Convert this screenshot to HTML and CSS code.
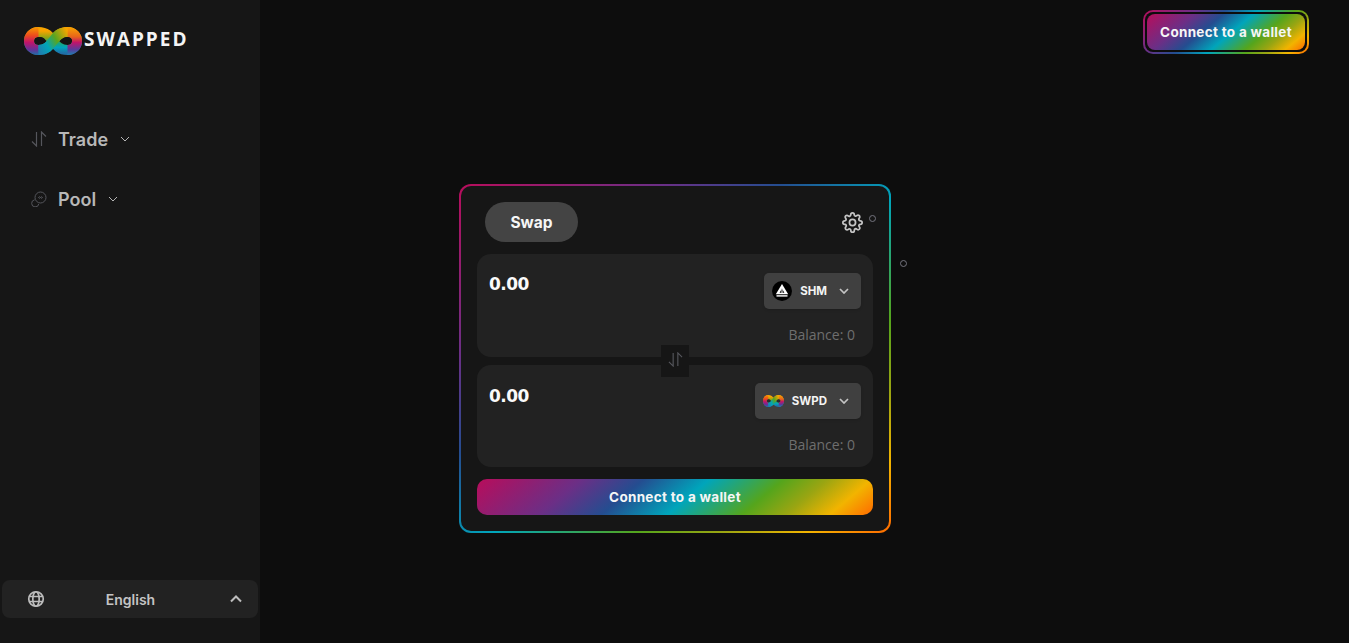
FILE: index.html
```html
<!DOCTYPE html>
<html lang="en">

<head>
    <meta charset="UTF-8">
    <title>Swapped</title>
    <link rel="stylesheet" href="styles.css">
</head>

<body>
    <!-- shared logo mark, used in the sidebar and the SWPD token -->
    <svg class="defs" width="0" height="0">
        <defs>
            <linearGradient id="ringGrad" gradientUnits="userSpaceOnUse" x1="0" y1="4" x2="0" y2="26">
                <stop offset="0" stop-color="#f7a400" />
                <stop offset="0.3" stop-color="#8fa514" />
                <stop offset="0.55" stop-color="#1aa678" />
                <stop offset="0.75" stop-color="#00a3bd" />
                <stop offset="1" stop-color="#1f6fa8" />
            </linearGradient>
            <linearGradient id="leftGrad" gradientUnits="userSpaceOnUse" x1="10" y1="0" x2="10" y2="28">
                <stop offset="0" stop-color="#f79a00" />
                <stop offset="0.3" stop-color="#ee4d1c" />
                <stop offset="0.55" stop-color="#c2136a" />
                <stop offset="0.8" stop-color="#6a2f96" />
                <stop offset="1" stop-color="#1f6fa8" />
            </linearGradient>
            <linearGradient id="rightGrad" gradientUnits="userSpaceOnUse" x1="48" y1="0" x2="48" y2="28">
                <stop offset="0" stop-color="#f7a400" />
                <stop offset="0.35" stop-color="#e8641a" />
                <stop offset="0.55" stop-color="#c2136a" />
                <stop offset="0.8" stop-color="#5a3a9a" />
                <stop offset="1" stop-color="#1f7fb0" />
            </linearGradient>
            <linearGradient id="ribbonGrad" gradientUnits="userSpaceOnUse" x1="14" y1="23" x2="44" y2="5">
                <stop offset="0" stop-color="#1f7fb0" />
                <stop offset="0.3" stop-color="#00a6b8" />
                <stop offset="0.6" stop-color="#5aa51e" />
                <stop offset="1" stop-color="#f7a400" />
            </linearGradient>
            <symbol id="infinity" viewBox="0 0 58 28" preserveAspectRatio="none">
                <path d="M29 14C26 10 23 5 14.500 5C8.500 5 5 9.300 5 14C5 18.700 8.500 23 14.500 23C23 23 26 18 29 14C32 10 35 5 43.500 5C49.500 5 53 9.300 53 14C53 18.700 49.500 23 43.500 23C35 23 32 18 29 14Z" fill="none" stroke="url(#ringGrad)" stroke-width="10" />
                <path d="M14.500 5C8.500 5 5 9.300 5 14C5 18.700 8.500 23 14.500 23" fill="none" stroke="url(#leftGrad)" stroke-width="10" />
                <path d="M43.500 5C49.500 5 53 9.300 53 14C53 18.700 49.500 23 43.500 23" fill="none" stroke="url(#rightGrad)" stroke-width="10" />
                <path d="M14.500 23C23 23 26 18 29 14C32 10 35 5 43.500 5" fill="none" stroke="url(#ribbonGrad)" stroke-width="10" />
                <ellipse cx="16" cy="13.500" rx="5" ry="3.500" fill="currentColor" />
                <ellipse cx="43" cy="13.500" rx="5" ry="3.500" fill="currentColor" />
            </symbol>
            <symbol id="arrows" viewBox="0 0 16 16">
                <path d="M5.500 1V15L1 10.500M10.500 15V1L15 5.500" fill="none" stroke="currentColor" stroke-width="1.200" />
            </symbol>
        </defs>
    </svg>

    <div class="app">
        <aside class="sidebar">
            <div class="brand">
                <svg class="brand-mark" width="58" height="28"><use href="#infinity" /></svg>
                <span class="brand-name">SWAPPED</span>
            </div>

            <nav class="nav">
                <div class="nav-item">
                    <svg class="nav-icon" width="16" height="16"><use href="#arrows" /></svg>
                    <span class="nav-label">Trade</span>
                    <svg class="nav-chevron" width="10" height="6" viewBox="0 0 10 6"><path d="M1 1L5 5L9 1" fill="none" stroke="#b5b5b5" stroke-width="1" /></svg>
                </div>
                <div class="nav-item">
                    <svg class="nav-icon" width="16" height="16" viewBox="0 0 16 16" fill="none" stroke="currentColor" stroke-width="1">
                        <circle cx="9.500" cy="6.500" r="5.500" />
                        <path d="M3.600 8.800A3.600 3.600 0 1 0 7.800 13" />
                        <path d="M7.500 6.500C8.200 5.500 8.800 5.500 9.500 6.500C10.200 7.500 10.800 7.500 11.500 6.500C10.800 5.500 10.200 5.500 9.500 6.500C8.800 7.500 8.200 7.500 7.500 6.500Z" />
                    </svg>
                    <span class="nav-label">Pool</span>
                    <svg class="nav-chevron" width="10" height="6" viewBox="0 0 10 6"><path d="M1 1L5 5L9 1" fill="none" stroke="#b5b5b5" stroke-width="1" /></svg>
                </div>
            </nav>

            <div class="lang">
                <svg width="18" height="18" viewBox="0 0 18 18" fill="none" stroke="#bdbdbd" stroke-width="1.700">
                    <circle cx="9" cy="9" r="7.250" />
                    <ellipse cx="9" cy="9" rx="3.200" ry="7.250" />
                    <path d="M2.200 6.500H15.800M2.200 11.500H15.800" />
                </svg>
                <span class="lang-name">English</span>
                <svg width="12" height="8" viewBox="0 0 12 8"><path d="M1 6.500L6 1.500L11 6.500" fill="none" stroke="#bdbdbd" stroke-width="2" /></svg>
            </div>
        </aside>

        <main class="content">
            <header class="topbar">
                <div class="wallet-frame">
                    <button class="wallet-btn">Connect to a wallet</button>
                </div>
            </header>

            <section class="swap-card">
                <span class="dot dot-near"></span>
                <span class="dot dot-far"></span>

                <div class="swap-head">
                    <div class="swap-tab">Swap</div>
                    <svg class="gear" width="21" height="21" viewBox="0 0 24 24" fill="none" stroke="#c4c4c4" stroke-width="2" stroke-linecap="round" stroke-linejoin="round">
                        <circle cx="12" cy="12" r="3.500" />
                        <path d="M19.400 15a1.650 1.650 0 0 0 .33 1.820l.06.06a2 2 0 1 1-2.830 2.830l-.06-.06a1.650 1.650 0 0 0-1.820-.33 1.650 1.650 0 0 0-1 1.510V21a2 2 0 1 1-4 0v-.09a1.650 1.650 0 0 0-1-1.510 1.650 1.650 0 0 0-1.820.33l-.06.06a2 2 0 1 1-2.830-2.830l.06-.06a1.650 1.650 0 0 0 .33-1.820 1.650 1.650 0 0 0-1.510-1H3a2 2 0 1 1 0-4h.09a1.650 1.650 0 0 0 1.510-1 1.650 1.650 0 0 0-.33-1.820l-.06-.06a2 2 0 1 1 2.830-2.830l.06.06a1.650 1.650 0 0 0 1.820.33h.08a1.650 1.650 0 0 0 1-1.510V3a2 2 0 1 1 4 0v.09a1.650 1.650 0 0 0 1 1.510 1.650 1.650 0 0 0 1.820-.33l.06-.06a2 2 0 1 1 2.830 2.830l-.06.06a1.650 1.650 0 0 0-.33 1.820v.08a1.650 1.650 0 0 0 1.510 1H21a2 2 0 1 1 0 4h-.09a1.650 1.650 0 0 0-1.510 1z" />
                    </svg>
                </div>

                <div class="panels">
                    <div class="panel panel-from">
                        <div class="panel-row">
                            <span class="amount">0.00</span>
                            <div class="token">
                                <svg width="20" height="20" viewBox="0 0 20 20">
                                    <circle cx="10" cy="10" r="10" fill="#000" />
                                    <path d="M10 3L16.200 13.200H3.800Z" fill="#fff" />
                                    <path d="M10 7.500L12.400 11.800H7.600Z" fill="#000" />
                                    <path d="M9.500 8H10.500V12.500H9.500Z" fill="#fff" />
                                    <path d="M4.500 14.200H15.500V15.600H4.500Z" fill="#fff" />
                                </svg>
                                <span class="token-name">SHM</span>
                                <svg class="token-chevron" width="10" height="6" viewBox="0 0 10 6"><path d="M1 1L5 5L9 1" fill="none" stroke="#c4c4c4" stroke-width="1.700" /></svg>
                            </div>
                        </div>
                        <div class="balance">Balance: 0</div>
                    </div>

                    <div class="flip">
                        <svg width="15" height="15"><use href="#arrows" /></svg>
                    </div>

                    <div class="panel panel-to">
                        <div class="panel-row">
                            <span class="amount">0.00</span>
                            <div class="token">
                                <svg class="token-mark" width="21" height="12"><use href="#infinity" /></svg>
                                <span class="token-name">SWPD</span>
                                <svg class="token-chevron" width="10" height="6" viewBox="0 0 10 6"><path d="M1 1L5 5L9 1" fill="none" stroke="#c4c4c4" stroke-width="1.700" /></svg>
                            </div>
                        </div>
                        <div class="balance">Balance: 0</div>
                    </div>
                </div>

                <button class="connect-btn">Connect to a wallet</button>
            </section>
        </main>
    </div>
</body>
</html>
```

FILE: styles.css
```css
:root {
    --rainbow: linear-gradient(140deg, #b80d5b 0%, #6b2f86 24%, #244d90 38%, #00a5bb 53%, #55a51c 70%, #9aa512 80%, #f2b400 90%, #ff6a00 100%);
}

* {
    box-sizing: border-box;
}

html,
body {
    margin: 0;
    height: 100%;
}

body {
    background-color: #0d0d0d;
    font-family: "Inter", "Liberation Sans", sans-serif;
    overflow: hidden;
}

.defs {
    display: block;
    height: 0;
}

.app {
    display: flex;
    height: 643px;
}

/* sidebar */
.sidebar {
    width: 260px;
    background-color: #161616;
    display: flex;
    flex-direction: column;
    padding: 27px 2px 25px;
}

.brand {
    display: flex;
    align-items: center;
    padding-left: 22px;
    height: 28px;
}

.brand-mark {
    color: #141414;
}

.brand-name {
    color: #f4f4f4;
    font-family: "Open Sans", sans-serif;
    font-size: 19px;
    font-weight: 700;
    letter-spacing: 2px;
    margin: 0 0 4px 2px;
}

.nav {
    flex: 1;
    padding: 69px 0 0 29px;
    display: flex;
    flex-direction: column;
    gap: 30px;
}

.nav-item {
    display: flex;
    align-items: center;
    height: 30px;
}

.nav-icon {
    color: #55565c;
    margin-right: 11px;
}

.nav-label {
    color: #b8b8b8;
    font-size: 18px;
    font-weight: 600;
    margin-right: 12px;
}

.lang {
    height: 38px;
    background-color: #222222;
    border-radius: 8px;
    display: flex;
    align-items: center;
    justify-content: space-between;
    padding: 0 16px 0 25px;
}

.lang-name {
    color: #c4c4c4;
    font-size: 14px;
    font-weight: 600;
    margin-right: 14px;
}

/* main */
.content {
    flex: 1;
    display: flex;
    flex-direction: column;
    padding: 10px 40px 0 199px;
}

.topbar {
    display: flex;
    justify-content: flex-end;
    height: 174px;
}

.wallet-frame {
    width: 166px;
    height: 44px;
    padding: 2px;
    border: 2px solid transparent;
    border-radius: 10px;
    background: linear-gradient(#0d0d0d, #0d0d0d) padding-box, var(--rainbow) border-box;
}

.wallet-btn,
.connect-btn {
    display: block;
    border: 0;
    color: #f6f6f6;
    font-family: inherit;
    font-weight: 700;
    font-size: 13.500px;
    letter-spacing: 0.300px;
    background: var(--rainbow);
}

.wallet-btn {
    width: 100%;
    height: 36px;
    padding: 0;
    border-radius: 8px;
}

.swap-card {
    position: relative;
    width: 432px;
    height: 349px;
    padding: 16px;
    border: 2px solid transparent;
    border-radius: 12px;
    background: linear-gradient(#161616, #161616) padding-box, var(--rainbow) border-box;
}

.dot {
    position: absolute;
    width: 7px;
    height: 7px;
    border: 1.500px solid #74747e;
    border-radius: 50%;
}

.dot-near {
    top: 29px;
    left: 408px;
}

.dot-far {
    top: 74px;
    left: 439px;
}

.swap-head {
    display: flex;
    align-items: center;
    justify-content: space-between;
    height: 40px;
    padding: 0 8px;
    margin-bottom: 12px;
}

.swap-tab {
    width: 93px;
    height: 40px;
    line-height: 42px;
    text-align: center;
    background-color: #444444;
    border-radius: 20px;
    color: #f6f6f6;
    font-size: 15.500px;
    font-weight: 700;
}

.gear {
    margin-right: 2px;
}

.panels {
    position: relative;
    display: flex;
    flex-direction: column;
    gap: 8px;
    margin-bottom: 12px;
}

.panel {
    background-color: #222222;
    border-radius: 14px;
    padding: 19px 18px 0 12px;
}

.panel-from {
    height: 103px;
}

.panel-to {
    height: 102px;
    padding-top: 18px;
}

.panel-row {
    display: flex;
    align-items: flex-start;
    justify-content: space-between;
    height: 53px;
}

.amount {
    color: #fafafa;
    font-family: "DejaVu Sans", sans-serif;
    font-size: 17px;
    font-weight: 700;
    line-height: 22px;
    letter-spacing: -0.500px;
    margin-top: 2px;
}

.panel-from .amount {
    margin-top: 0;
}

.token {
    display: flex;
    align-items: center;
    height: 36px;
    padding: 0 12px 0 8px;
    margin-right: -6px;
    background-color: #404040;
    border-radius: 5px;
    box-shadow: 0 1px 3px rgba(0, 0, 0, 0.15);
}

.token-mark {
    color: #2a2a2a;
}

.token-name {
    color: #f4f4f4;
    font-size: 11.500px;
    font-weight: 700;
    margin: 0 12px 0 8px;
}

.balance {
    text-align: right;
    color: #6e6e6e;
    font-family: "Open Sans", sans-serif;
    font-size: 14px;
    line-height: 18px;
}

.flip {
    position: absolute;
    top: 91px;
    left: 184px;
    width: 28px;
    height: 32px;
    padding-bottom: 4px;
    background-color: #161616;
    color: #55565c;
    display: flex;
    align-items: center;
    justify-content: center;
}

.connect-btn {
    width: 100%;
    height: 36px;
    border-radius: 10px;
}
```
